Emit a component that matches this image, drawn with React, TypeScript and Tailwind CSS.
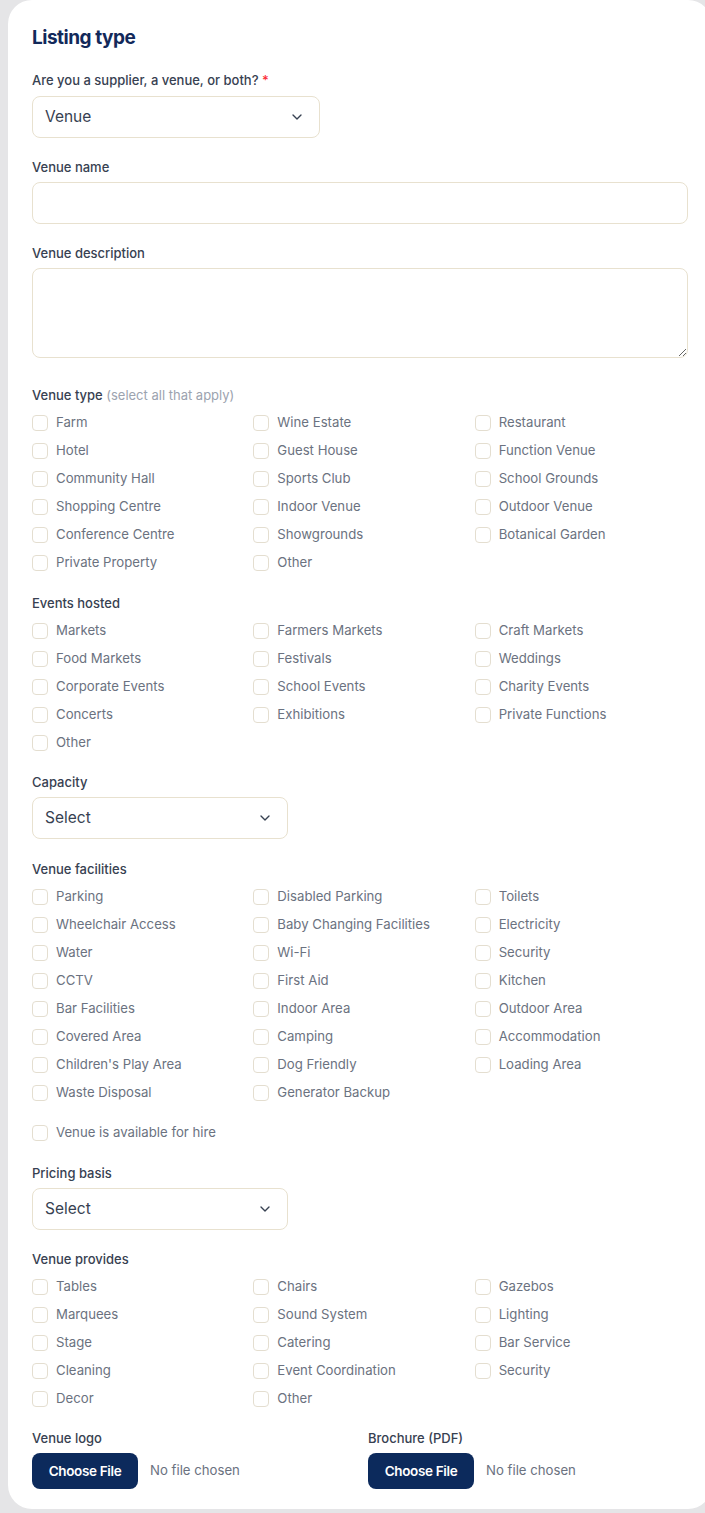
import React from 'react';

const VENUE_TYPES = [
    'Farm', 'Wine Estate', 'Restaurant',
    'Hotel', 'Guest House', 'Function Venue',
    'Community Hall', 'Sports Club', 'School Grounds',
    'Shopping Centre', 'Indoor Venue', 'Outdoor Venue',
    'Conference Centre', 'Showgrounds', 'Botanical Garden',
    'Private Property', 'Other',
];

const EVENTS = [
    'Markets', 'Farmers Markets', 'Craft Markets',
    'Food Markets', 'Festivals', 'Weddings',
    'Corporate Events', 'School Events', 'Charity Events',
    'Concerts', 'Exhibitions', 'Private Functions',
    'Other',
];

const FACILITIES = [
    'Parking', 'Disabled Parking', 'Toilets',
    'Wheelchair Access', 'Baby Changing Facilities', 'Electricity',
    'Water', 'Wi-Fi', 'Security',
    'CCTV', 'First Aid', 'Kitchen',
    'Bar Facilities', 'Indoor Area', 'Outdoor Area',
    'Covered Area', 'Camping', 'Accommodation',
    "Children's Play Area", 'Dog Friendly', 'Loading Area',
    'Waste Disposal', 'Generator Backup',
];

const PROVIDES = [
    'Tables', 'Chairs', 'Gazebos',
    'Marquees', 'Sound System', 'Lighting',
    'Stage', 'Catering', 'Bar Service',
    'Cleaning', 'Event Coordination', 'Security',
    'Decor', 'Other',
];

const Label: React.FC<{ children: React.ReactNode; className?: string }> = ({ children, className = 'mb-[5px]' }) => (
    <div className={`text-[13px] leading-5 font-medium text-[#374151] ${className}`}>{children}</div>
);

const Check: React.FC<{ label: string }> = ({ label }) => (
    <label className="flex items-center gap-2 h-5">
        <span className="w-4 h-4 rounded-[4px] border border-[#e4ded0] bg-white shrink-0" />
        <span className="text-[13.2px] text-[#6b7280] whitespace-nowrap">{label}</span>
    </label>
);

const CheckGroup: React.FC<{ items: string[] }> = ({ items }) => (
    <div className="grid grid-cols-3 gap-x-2 gap-y-2">
        {items.map((item, i) => (
            <Check key={item + i} label={item} />
        ))}
    </div>
);

const Chevron = () => (
    <svg width="16" height="16" viewBox="0 0 24 24" fill="none" stroke="#374151" strokeWidth="2" strokeLinecap="round" strokeLinejoin="round">
        <path d="m6 9 6 6 6-6" />
    </svg>
);

const Select: React.FC<{ value: string; width: string }> = ({ value, width }) => (
    <div className={`${width} h-[42px] rounded-lg border border-[#e8e1cf] bg-white flex items-center justify-between pl-[12px] pr-[14px]`}>
        <span className="text-[15.5px] text-[#374151]">{value}</span>
        <Chevron />
    </div>
);

const FileInput: React.FC<{ label: string }> = ({ label }) => (
    <div>
        <Label className="mb-[5px]">{label}</Label>
        <div className="flex items-center gap-3">
            <button className="h-9 w-[106px] rounded-lg bg-[#0c2a5c] text-white text-[13.5px] font-semibold tracking-tight">Choose File</button>
            <span className="text-[13.2px] text-[#6b7280]">No file chosen</span>
        </div>
    </div>
);

const App: React.FC = () => {
    return (
        <div className="w-[705px] min-h-[1513px] bg-[#e5e5e7] overflow-hidden" style={{ fontFamily: 'Inter, "Noto Sans", sans-serif' }}>
            <div className="ml-2 w-[704px] bg-white rounded-[24px] px-6 pt-6 pb-5">
                <h2 className="text-[19px] leading-7 font-bold tracking-tight text-[#12295a] mb-[18px]">Listing type</h2>

                <div className="flex flex-col gap-[19px]">
                    <div>
                        <Label className="mb-1.5">
                            Are you a supplier, a venue, or both? <span className="text-red-500">*</span>
                        </Label>
                        <Select value="Venue" width="w-[288px]" />
                    </div>

                    <div>
                        <Label>Venue name</Label>
                        <div className="h-[42px] rounded-lg border border-[#e8e1cf]" />
                    </div>

                    <div>
                        <Label>Venue description</Label>
                        <textarea className="block w-full h-[90px] rounded-lg border border-[#e8e1cf] outline-none mb-[8px]" />
                    </div>

                    <div>
                        <Label className="mb-2">
                            Venue type <span className="font-normal text-[#9ca3af]">(select all that apply)</span>
                        </Label>
                        <CheckGroup items={VENUE_TYPES} />
                    </div>

                    <div className="pt-px">
                        <Label className="mb-2">Events hosted</Label>
                        <CheckGroup items={EVENTS} />
                    </div>

                    <div>
                        <Label>Capacity</Label>
                        <Select value="Select" width="w-[256px]" />
                    </div>

                    <div className="pt-px">
                        <Label className="mb-2">Venue facilities</Label>
                        <CheckGroup items={FACILITIES} />
                    </div>

                    <div className="pt-px">
                        <Check label="Venue is available for hire" />
                    </div>

                    <div className="pt-px">
                        <Label>Pricing basis</Label>
                        <Select value="Select" width="w-[256px]" />
                    </div>

                    <div>
                        <Label className="mb-2">Venue provides</Label>
                        <CheckGroup items={PROVIDES} />
                    </div>

                    <div className="grid grid-cols-2 gap-4">
                        <FileInput label="Venue logo" />
                        <FileInput label="Brochure (PDF)" />
                    </div>
                </div>
            </div>
        </div>
    );
};

export default App;
